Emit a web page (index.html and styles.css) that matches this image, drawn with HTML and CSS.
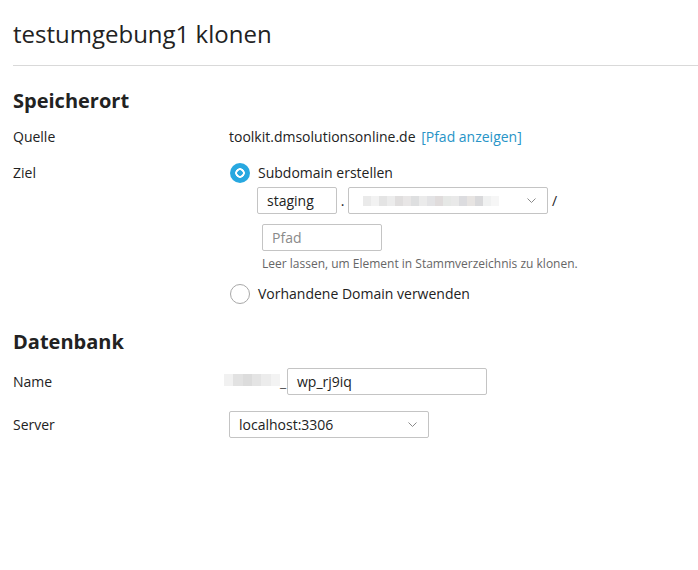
FILE: index.html
```html
<!DOCTYPE html>
<html lang="de">
<head>
<meta charset="utf-8">
<title>testumgebung1 klonen</title>
<link rel="stylesheet" href="styles.css">
</head>
<body>
<div class="page">
  <header class="head">
    <h1 class="title">testumgebung1 klonen</h1>
  </header>

  <h2 class="section">Speicherort</h2>
  <div class="form">
    <div class="label">Quelle</div>
    <div class="value">toolkit.dmsolutionsonline.de <a class="link" href="#">[Pfad anzeigen]</a></div>

    <div class="label label-ziel">Ziel</div>
    <div class="value value-ziel">
      <label class="radio-row">
        <span class="radio radio-on"></span>
        <span>Subdomain erstellen</span>
      </label>
      <div class="sub">
        <div class="domain-row">
          <div class="input input-sub">staging</div>
          <span class="dot">.</span>
          <div class="select select-domain">
            <div class="blur blur-domain">
              <i style="background:#eaeaea"></i><i style="background:#f2f2f2"></i><i style="background:#e4e4e4"></i><i style="background:#ececec"></i><i style="background:#e0dede"></i><i style="background:#e8e6e6"></i><i style="background:#dedfe0"></i><i style="background:#ebebeb"></i><i style="background:#e3e3e5"></i><i style="background:#e0dcdc"></i><i style="background:#e6e8e6"></i><i style="background:#e9e9e9"></i><i style="background:#dcdcdf"></i><i style="background:#e7e4e2"></i><i style="background:#d9d9db"></i><i style="background:#f0f1f1"></i><i style="background:#f6f6f6"></i>
            </div>
            <svg class="chev" width="9" height="5" viewBox="0 0 9 5"><path d="M0.5 0.5l4 4 4-4" fill="none" stroke="#8a8a8a" stroke-width="1"/></svg>
          </div>
          <span class="slash">/</span>
        </div>
        <div class="input input-path placeholder">Pfad</div>
        <div class="hint">Leer lassen, um Element in Stammverzeichnis zu klonen.</div>
      </div>
      <label class="radio-row radio-row-2">
        <span class="radio"></span>
        <span>Vorhandene Domain verwenden</span>
      </label>
    </div>
  </div>

  <h2 class="section section-db">Datenbank</h2>
  <div class="form">
    <div class="label label-field">Name</div>
    <div class="value field-row name-row">
      <div class="blur blur-db">
        <i style="background:#f1f1f1"></i><i style="background:#e2e2e2"></i><i style="background:#dcdcdc"></i><i style="background:#e4e4e4"></i><i style="background:#ececec"></i><i style="background:#f3f3f3"></i>
      </div>
      <span class="underscore">_</span>
      <div class="input input-db">wp_rj9iq</div>
    </div>

    <div class="label label-field">Server</div>
    <div class="value field-row">
      <div class="select select-server">
        <span>localhost:3306</span>
        <svg class="chev" width="9" height="5" viewBox="0 0 9 5"><path d="M0.5 0.5l4 4 4-4" fill="none" stroke="#8a8a8a" stroke-width="1"/></svg>
      </div>
    </div>
  </div>
</div>
</body>
</html>
```

FILE: styles.css
```css
* { box-sizing: border-box; }

html, body {
  margin: 0;
  padding: 0;
  background: #fff;
}

body {
  font-family: "Open Sans", "Noto Sans", sans-serif;
  font-size: 14px;
  line-height: 20px;
  color: #222;
}

.page {
  padding-left: 13px;
}

.head {
  border-bottom: 1px solid #d9d9d9;
  padding-top: 17px;
  padding-bottom: 15px;
}

.title {
  margin: 0;
  font-size: 24px;
  line-height: 33px;
  font-weight: 400;
  color: #222;
}

.section {
  margin: 21px 0 0;
  font-size: 20px;
  line-height: 27px;
  font-weight: 700;
  color: #222;
}

.section-db {
  margin-top: 24px;
}

.form {
  display: grid;
  grid-template-columns: 216px 1fr;
  row-gap: 16px;
  margin-top: 13px;
}

.label {
  color: #222;
}

.value {
  color: #222;
}

.link {
  color: #2894c7;
  text-decoration: none;
  margin-left: 2px;
}

.radio-row {
  display: flex;
  align-items: center;
  gap: 8px;
  height: 20px;
  margin-left: 1px;
}

.radio {
  width: 20px;
  height: 20px;
  border-radius: 50%;
  border: 1px solid #a8a8a8;
  background: #fff;
  flex: none;
}

.radio-on {
  border: none;
  background: radial-gradient(circle, #28a8e0 0 2.5px, #fff 3px 4.5px, #28a8e0 5px);
}

.sub {
  padding-left: 28px;
  margin-top: 4px;
}

.domain-row {
  display: flex;
  align-items: center;
  height: 27px;
}

.input, .select {
  height: 27px;
  border: 1px solid #c4c4c4;
  border-radius: 2px;
  background: #fff;
  display: flex;
  align-items: center;
  padding: 0 9px;
  color: #222;
}

.input-sub {
  width: 80px;
}

.dot {
  width: 11px;
  text-align: center;
}

.select {
  justify-content: space-between;
}

.select-domain {
  width: 200px;
  padding-left: 14px;
  padding-right: 11px;
}

.slash {
  margin-left: 4px;
}

.blur {
  display: flex;
}

.blur i {
  display: block;
  width: 8px;
  height: 12px;
}

.blur-domain i {
  height: 10px;
}

.chev {
  flex: none;
}

.input-path {
  width: 120px;
  height: 27px;
  margin-top: 10px;
  margin-left: 5px;
}

.placeholder {
  color: #8a8a8a;
}

.hint {
  margin-left: 5px;
  margin-top: 5px;
  font-size: 12px;
  line-height: 16px;
  color: #666;
}

.radio-row-2 {
  margin-top: 12px;
}

.label-field {
  display: flex;
  align-items: center;
}

.field-row {
  display: flex;
  align-items: center;
}

.name-row {
  margin-left: -5px;
}

.blur-db {
  width: 56px;
  height: 12px;
  margin-top: -4px;
}

.blur-db i {
  width: 9.33px;
}

.underscore {
  width: 7px;
  color: #555;
}

.input-db {
  width: 200px;
}

.select-server {
  width: 200px;
  padding-right: 11px;
}
```
